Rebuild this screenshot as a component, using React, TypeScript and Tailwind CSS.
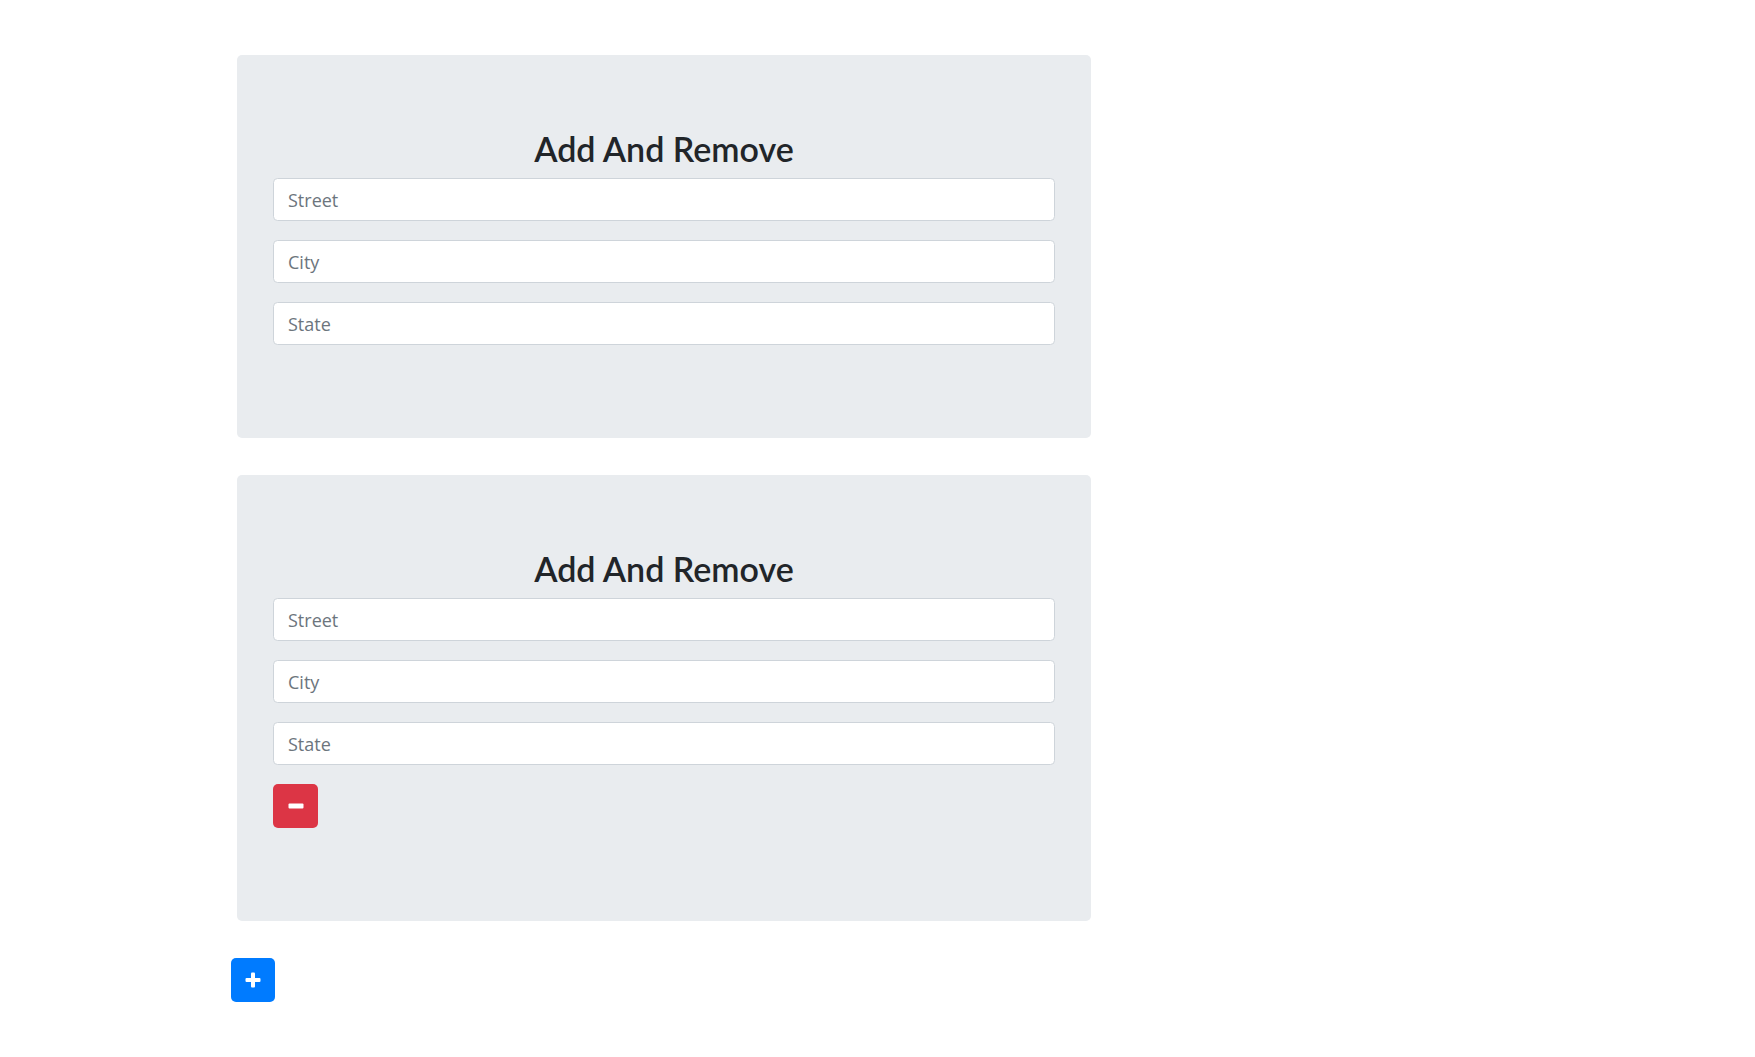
import { useState } from "react";

type Address = { id: number };

function AddressCard({ removable, onRemove }: { removable: boolean; onRemove: () => void }) {
  return (
    <div className="ml-[6px] w-[854px] rounded-[5px] bg-[#e9ecef] px-[36px] pt-[72px] pb-[93px]">
      <h2
        className="mb-[8px] text-center text-[34px] leading-[43px] font-semibold text-[#212529]"
        style={{ fontFamily: 'Lato, "Open Sans", sans-serif' }}
      >
        Add And Remove
      </h2>
      <div className="flex flex-col gap-[19px]">
        {["Street", "City", "State"].map((p) => (
          <input
            key={p}
            type="text"
            placeholder={p}
            className="h-[43px] w-full rounded-[4.5px] border border-[#ced4da] bg-white px-[14px] text-[18px] text-[#495057] outline-none placeholder:text-[#6c757d]"
          />
        ))}
        {removable && (
          <button
            type="button"
            onClick={onRemove}
            className="flex h-[44px] w-[45px] items-center justify-center rounded-[5px] bg-[#dc3545]"
          >
            <svg width="16" height="16" viewBox="0 0 16 16">
              <rect x="0.5" y="5.5" width="15" height="5" rx="1" fill="#fff" />
            </svg>
          </button>
        )}
      </div>
    </div>
  );
}

export default function App() {
  const [items, setItems] = useState<Address[]>([{ id: 1 }, { id: 2 }]);
  const [next, setNext] = useState(3);

  return (
    <div
      className="min-h-screen bg-white pt-[55px] pl-[231px] pb-[40px]"
      style={{ fontFamily: '"Open Sans", "Noto Sans", sans-serif' }}
    >
      <div className="flex flex-col gap-[37px]">
        {items.map((it, i) => (
          <AddressCard
            key={it.id}
            removable={i > 0}
            onRemove={() => setItems(items.filter((x) => x.id !== it.id))}
          />
        ))}
      </div>
      <button
        type="button"
        onClick={() => {
          setItems([...items, { id: next }]);
          setNext(next + 1);
        }}
        className="mt-[37px] flex h-[44px] w-[44px] items-center justify-center rounded-[5px] bg-[#007bff]"
      >
        <svg width="16" height="16" viewBox="0 0 16 16">
          <rect x="0.5" y="6" width="15" height="4" rx="1" fill="#fff" />
          <rect x="6" y="0.5" width="4" height="15" rx="1" fill="#fff" />
        </svg>
      </button>
    </div>
  );
}
